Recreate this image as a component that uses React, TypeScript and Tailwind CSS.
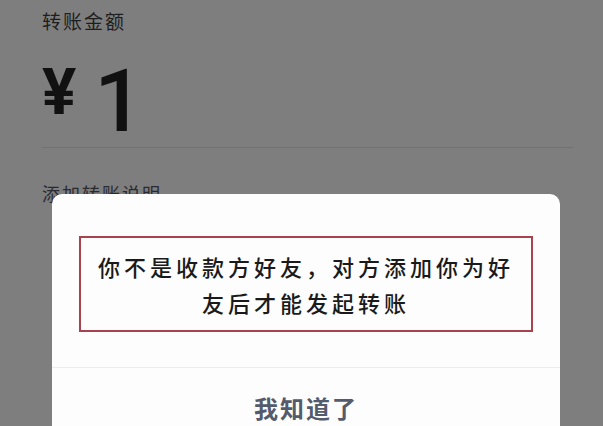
export default function App() {
  return (
    <div
      className="relative h-[426px] w-[603px] overflow-hidden bg-[#7e7e7e]"
      style={{ fontFamily: '"Noto Sans CJK SC", "Liberation Sans", sans-serif' }}
    >
      {/* page behind the dialog */}
      <div className="pl-[42px] pr-[30px] pt-[9px]">
        <div className="text-[19px] leading-[24px] tracking-[2px] text-[#1e1e1e]">转账金额</div>

        <div
          className="mt-[25px] flex items-start text-[#111]"
          style={{ fontFamily: 'Roboto, "Liberation Sans", sans-serif' }}
        >
          <span className="mt-[3px] text-[64px] font-bold leading-none">¥</span>
          <span className="ml-[18px] text-[87px] font-medium leading-none">1</span>
        </div>

        <div className="mt-[2px] h-px bg-[#727272]" />

        <div className="mt-[33px] text-[18px] leading-[24px] tracking-[2px] text-[#2a2a33]">添加转账说明</div>
      </div>

      {/* alert dialog */}
      <div className="absolute left-[52px] top-[194px] w-[508px] rounded-[10px] bg-[#fdfdfd] pb-[40px]">
        <div className="px-[27px] pt-[42px]">
          <div className="border-2 border-[#a8434e] px-[14px] py-[10px] text-center text-[22px] font-medium leading-[36px] tracking-[4px] text-[#1a1a1a]">
            <div>你不是收款方好友，对方添加你为好</div>
            <div>友后才能发起转账</div>
          </div>
        </div>
        <div className="mt-[35px] h-px bg-[#ededed]" />
        <div className="pt-[24px] text-center text-[24px] font-bold leading-[32px] tracking-[2px] text-[#535b6c]">
          我知道了
        </div>
      </div>
    </div>
  );
}
